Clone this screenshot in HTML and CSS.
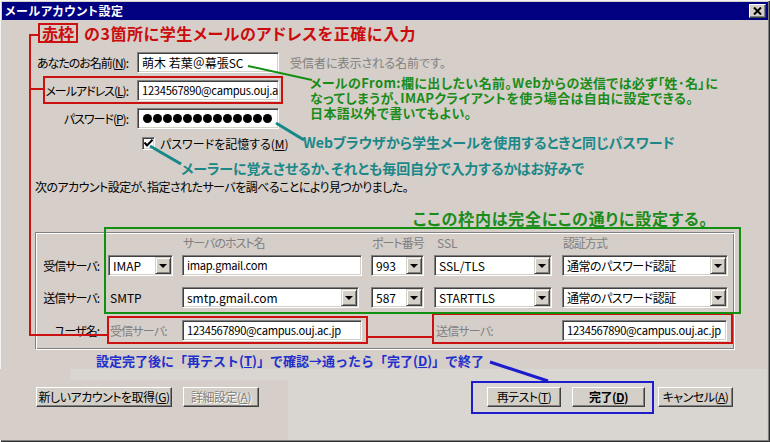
FILE: index.html
```html
<!DOCTYPE html>
<html lang="ja">
<head>
<meta charset="utf-8">
<title>メールアカウント設定</title>
<link rel="stylesheet" href="styles.css">
</head>
<body>
<div class="window">
  <div class="titlebar">
    <span class="title">メールアカウント設定</span>
    <span class="close"><svg width="9" height="8" viewBox="0 0 9 8"><path d="M1 0.5 L8 7.5 M8 0.5 L1 7.5" stroke="#000" stroke-width="2"/></svg></span>
  </div>

  <div class="banner"><span class="redbox">赤枠</span><span class="banner-text">の3箇所に学生メールのアドレスを正確に入力</span></div>

  <div class="form">
    <span class="lbl">あなたのお名前(<u>N</u>):</span>
    <div class="field name">萌木 若葉＠幕張SC</div>
    <span class="hint">受信者に表示される名前です。</span>

    <span class="lbl">メールアドレス(<u>L</u>):</span>
    <div class="field">1234567890@campus.ouj.ac.jp</div>
    <span></span>

    <span class="lbl">パスワード(<u>P</u>):</span>
    <div class="field dots"><i></i><i></i><i></i><i></i><i></i><i></i><i></i><i></i><i></i><i></i><i></i><i></i><i></i></div>
    <span></span>
  </div>

  <div class="remember">
    <span class="checkbox"><svg width="9" height="9" viewBox="0 0 9 9"><path d="M0.5 3.5 L3 6.5 L8.5 0.8" fill="none" stroke="#000" stroke-width="2"/></svg></span>
    <span>パスワードを記憶する(<u>M</u>)</span>
  </div>

  <p class="note">次のアカウント設定が、指定されたサーバを調べることにより見つかりました。</p>

  <p class="green-head">ここの枠内は完全にこの通りに設定する。</p>

  <div class="group">
    <div class="grid head">
      <span></span><span></span>
      <span class="colh">サーバのホスト名</span>
      <span class="colh">ポート番号</span>
      <span class="colh ssl">SSL</span>
      <span class="colh">認証方式</span>
    </div>
    <div class="grid rows">
      <span class="rl">受信サーバ:</span>
      <div class="select w-type"><span class="sv">IMAP</span><span class="arrow"></span></div>
      <div class="field w-host">imap.gmail.com</div>
      <div class="select w-port"><span class="sv">993</span><span class="arrow"></span></div>
      <div class="select w-ssl"><span class="sv">SSL/TLS</span><span class="arrow"></span></div>
      <div class="select w-auth"><span class="sv jp">通常のパスワード認証</span><span class="arrow"></span></div>

      <span class="rl">送信サーバ:</span>
      <span class="plain">SMTP</span>
      <div class="select w-host2"><span class="sv">smtp.gmail.com</span><span class="arrow"></span></div>
      <div class="select w-port"><span class="sv">587</span><span class="arrow"></span></div>
      <div class="select w-ssl"><span class="sv">STARTTLS</span><span class="arrow"></span></div>
      <div class="select w-auth"><span class="sv jp">通常のパスワード認証</span><span class="arrow"></span></div>

      <span class="rl">ユーザ名:</span>
      <span class="plain dim">受信サーバ:</span>
      <div class="field w-host">1234567890@campus.ouj.ac.jp</div>
      <span></span>
      <span class="plain dim">送信サーバ:</span>
      <div class="field w-auth">1234567890@campus.ouj.ac.jp</div>
    </div>
  </div>

  <p class="blue-note">設定完了後に「再テスト(<u>T</u>)」で確認→通ったら「完了(<u>D</u>)」で終了</p>

  <div class="footer">
    <div class="footer-left">
      <button class="btn b-new">新しいアカウントを取得(<u>G</u>)</button>
      <button class="btn b-adv" disabled>詳細設定(<u>A</u>)</button>
    </div>
    <div class="footer-right">
      <button class="btn b-retest">再テスト(<u>T</u>)</button>
      <button class="btn b-done">完了(<u>D</u>)</button>
      <button class="btn b-cancel">キャンセル(<u>A</u>)</button>
    </div>
  </div>

  <svg class="marks" width="770" height="442" viewBox="0 0 770 442">
    <g fill="none" stroke="#cc1111" stroke-width="2">
      <polyline points="38,35 30,35 30,335 108,335"/>
      <line x1="30" y1="89" x2="44" y2="89"/>
      <rect x="44" y="77" width="238" height="26"/>
      <rect x="108" y="317" width="259" height="26"/>
      <rect x="433" y="314" width="299" height="29"/>
      <line x1="367" y1="337" x2="433" y2="337"/>
    </g>
    <g fill="none" stroke="#129012" stroke-width="2">
      <rect x="105" y="228" width="635" height="85"/>
      <line x1="248" y1="66" x2="312" y2="80"/>
    </g>
    <g fill="none" stroke="#168888" stroke-width="3">
      <line x1="276" y1="123" x2="304" y2="140"/>
      <line x1="150" y1="146" x2="181" y2="164"/>
    </g>
    <g fill="none" stroke="#1c1ccc" stroke-width="2">
      <rect x="472" y="382" width="181" height="31"/>
      <line x1="490" y1="362" x2="548" y2="381" stroke-width="3"/>
    </g>
  </svg>

  <p class="callout c-from">メールのFrom:欄に出したい名前。Webからの送信では必ず「姓･名」に<br>なってしまうが、IMAPクライアントを使う場合は自由に設定できる。<br>日本語以外で書いてもよい。</p>
  <p class="callout c-pass">Webブラウザから学生メールを使用するときと同じパスワード</p>
  <p class="callout c-remember">メーラーに覚えさせるか、それとも毎回自分で入力するかはお好みで</p>
</div>
</body>
</html>
```

FILE: styles.css
```css
* { box-sizing: border-box; }
html, body { margin: 0; padding: 0; }
body {
  background: #d5cec9;
  font-family: "Noto Sans CJK JP", "Noto Sans", sans-serif;
  font-size: 12px;
  color: #000;
  font-feature-settings: "palt";
}
u { text-decoration: underline; text-underline-offset: 1px; }

.window {
  position: relative;
  width: 770px;
  height: 442px;
  padding: 2px;
  background: #d5cec9;
  box-shadow: inset 1px 1px 0 #f4f4f4, inset -1px -1px 0 #303030, inset -2px -2px 0 #808080;
  overflow: hidden;
}

.titlebar {
  height: 18px;
  background: #000080;
  display: flex;
  align-items: center;
  justify-content: space-between;
  padding: 0 2px 0 3px;
}
.title { color: #fff; font-weight: 700; font-size: 12px; line-height: 18px; letter-spacing: 0.6px; }
.close {
  width: 17px; height: 14px;
  background: #d4d0c8;
  border: 1px solid; border-color: #fff #404040 #404040 #fff;
  box-shadow: inset -1px -1px 0 #808080;
  display: flex; align-items: center; justify-content: center;
}

.banner { display: flex; align-items: center; margin: 3px 0 0 36px; height: 20px; }
.redbox {
  border: 2px solid #cc1111;
  color: #cc0c0c;
  font-size: 16px; font-weight: 700; line-height: 16px;
  padding: 0 2px; height: 20px;
  font-feature-settings: normal;
}
.banner-text { margin-left: 6px; color: #cc0c0c; font-size: 16px; font-weight: 700; line-height: 18px; letter-spacing: 0.6px; }

.form {
  display: grid;
  grid-template-columns: 98px 142px 1fr;
  grid-auto-rows: 21px;
  column-gap: 9px;
  row-gap: 7px;
  margin: 9px 0 0 28px;
  align-items: center;
}
.lbl { text-align: right; line-height: 21px; white-space: nowrap; letter-spacing: -1px; }
.hint { color: #808080; margin-left: 2px; line-height: 21px; white-space: nowrap; }

.field {
  height: 21px;
  background: #fff;
  border: 1px solid; border-color: #808080 #fff #fff #808080;
  box-shadow: inset 1px 1px 0 #404040, inset -1px -1px 0 #d4d0c8;
  padding: 0 4px;
  overflow: hidden;
  white-space: nowrap;
  line-height: 19px;
  font-size: 11.2px;
  letter-spacing: -0.3px;
}
.field.name { font-size: 12px; letter-spacing: 0; }
.dots { display: flex; align-items: center; gap: 1px; padding-left: 5px; }
.dots i { display: block; width: 9px; height: 9px; border-radius: 50%; background: #000; }

.remember { display: flex; align-items: center; gap: 5px; margin: 8px 0 0 140px; height: 13px; line-height: 13px; }
.checkbox {
  width: 13px; height: 13px; background: #fff;
  border: 1px solid; border-color: #808080 #fff #fff #808080;
  box-shadow: inset 1px 1px 0 #404040, inset -1px -1px 0 #d4d0c8;
  display: flex; align-items: center; justify-content: center;
}

.note { margin: 29px 0 0 33px; line-height: 16px; letter-spacing: -0.55px; }
.green-head { margin: 14px 0 0 411px; color: #1a8c1a; font-size: 16px; font-weight: 700; line-height: 18px; letter-spacing: 0.8px; }

.group {
  margin: 5px 0 0 33px;
  width: 700px;
  height: 118px;
  border: 1px solid; border-color: #808080 #fff #fff #808080;
  box-shadow: inset 1px 1px 0 #fff, inset -1px -1px 0 #808080;
  padding: 1px 0 7px 0;
}
.grid { display: grid; grid-template-columns: 72px 74px 189px 63px 128px 166px; }
.head { height: 21px; align-items: center; padding-bottom: 3px; color: #808080; }
.colh { padding-left: 1px; line-height: 18px; letter-spacing: -1px; }
.colh.ssl { padding-left: 3px; letter-spacing: 0; }
.rows { grid-template-rows: 21px 21px 22px; row-gap: 11px; align-items: end; }
.rl { text-align: right; padding-right: 9px; line-height: 21px; white-space: nowrap; letter-spacing: -1px; }
.plain { line-height: 21px; padding-left: 2px; white-space: nowrap; }
.dim { color: #808080; letter-spacing: -0.8px; }

.select {
  height: 21px;
  background: #fff;
  border: 1px solid; border-color: #808080 #fff #fff #808080;
  box-shadow: inset 1px 1px 0 #404040, inset -1px -1px 0 #d4d0c8;
  display: flex; align-items: stretch;
  padding: 1px;
}
.sv { flex: 1; padding-left: 3px; line-height: 17px; white-space: nowrap; overflow: hidden; }
.sv.jp { letter-spacing: -0.5px; }
.arrow {
  width: 16px; flex: none;
  background: #d4d0c8;
  border: 1px solid; border-color: #d4d0c8 #404040 #404040 #d4d0c8;
  box-shadow: inset 1px 1px 0 #fff, inset -1px -1px 0 #808080;
  position: relative;
}
.arrow::after {
  content: ""; position: absolute; left: 3px; top: 6px;
  border-left: 4px solid transparent; border-right: 4px solid transparent; border-top: 4px solid #000;
}
.w-type { width: 65px; }
.w-host { width: 180px; }
.w-host2 { width: 177px; }
.w-port { width: 53px; }
.w-ssl { width: 118px; }
.w-auth { width: 166px; }
.field.w-auth { width: 165px; }

.blue-note {
  margin: 3px 0 0 94px; color: #1f2fcc; font-size: 13px; font-weight: 700; line-height: 16px;
  font-feature-settings: normal; letter-spacing: 0; white-space: nowrap;
}

.footer {
  margin-left: -2px;
  width: 767px;
  height: 71px;
  background: linear-gradient(to right, #d5cec9 70px, #d9d6d1 70px);
  display: flex;
  justify-content: space-between;
}
.footer-left {
  width: 288px;
  margin-top: 11px;
  background: #d5cec9;
  padding: 7px 0 0 36px;
  display: flex; gap: 11px; align-items: flex-start;
}
.footer-right { padding: 18px 34px 0 0; display: flex; align-items: flex-start; }
.btn {
  height: 20px;
  padding: 0;
  font: inherit;
  font-size: 12px;
  line-height: 16px;
  background: #d4d0c8;
  border: 1px solid; border-color: #fff #404040 #404040 #fff;
  box-shadow: inset -1px -1px 0 #808080;
  color: #000;
  white-space: nowrap;
  letter-spacing: -0.5px;
}
.btn[disabled] { color: #808080; text-shadow: 1px 1px 0 #fff; }
.b-new { width: 136px; }
.b-adv { width: 76px; }
.b-retest { width: 74px; }
.b-done { width: 73px; margin-left: 11px; font-weight: 700; }
.b-cancel { width: 75px; margin-left: 13px; }

.marks { position: absolute; left: 0; top: 0; pointer-events: none; }

.callout { position: absolute; margin: 0; font-weight: 700; white-space: nowrap; }
.c-from { left: 310px; top: 75px; color: #1a8c1a; font-size: 13px; line-height: 15px; letter-spacing: 0.4px; }
.c-pass { left: 303px; top: 133px; color: #1a8888; font-size: 14px; line-height: 18px; }
.c-remember { left: 181px; top: 159px; color: #1a8888; font-size: 14px; line-height: 18px; letter-spacing: -0.1px; }
```
